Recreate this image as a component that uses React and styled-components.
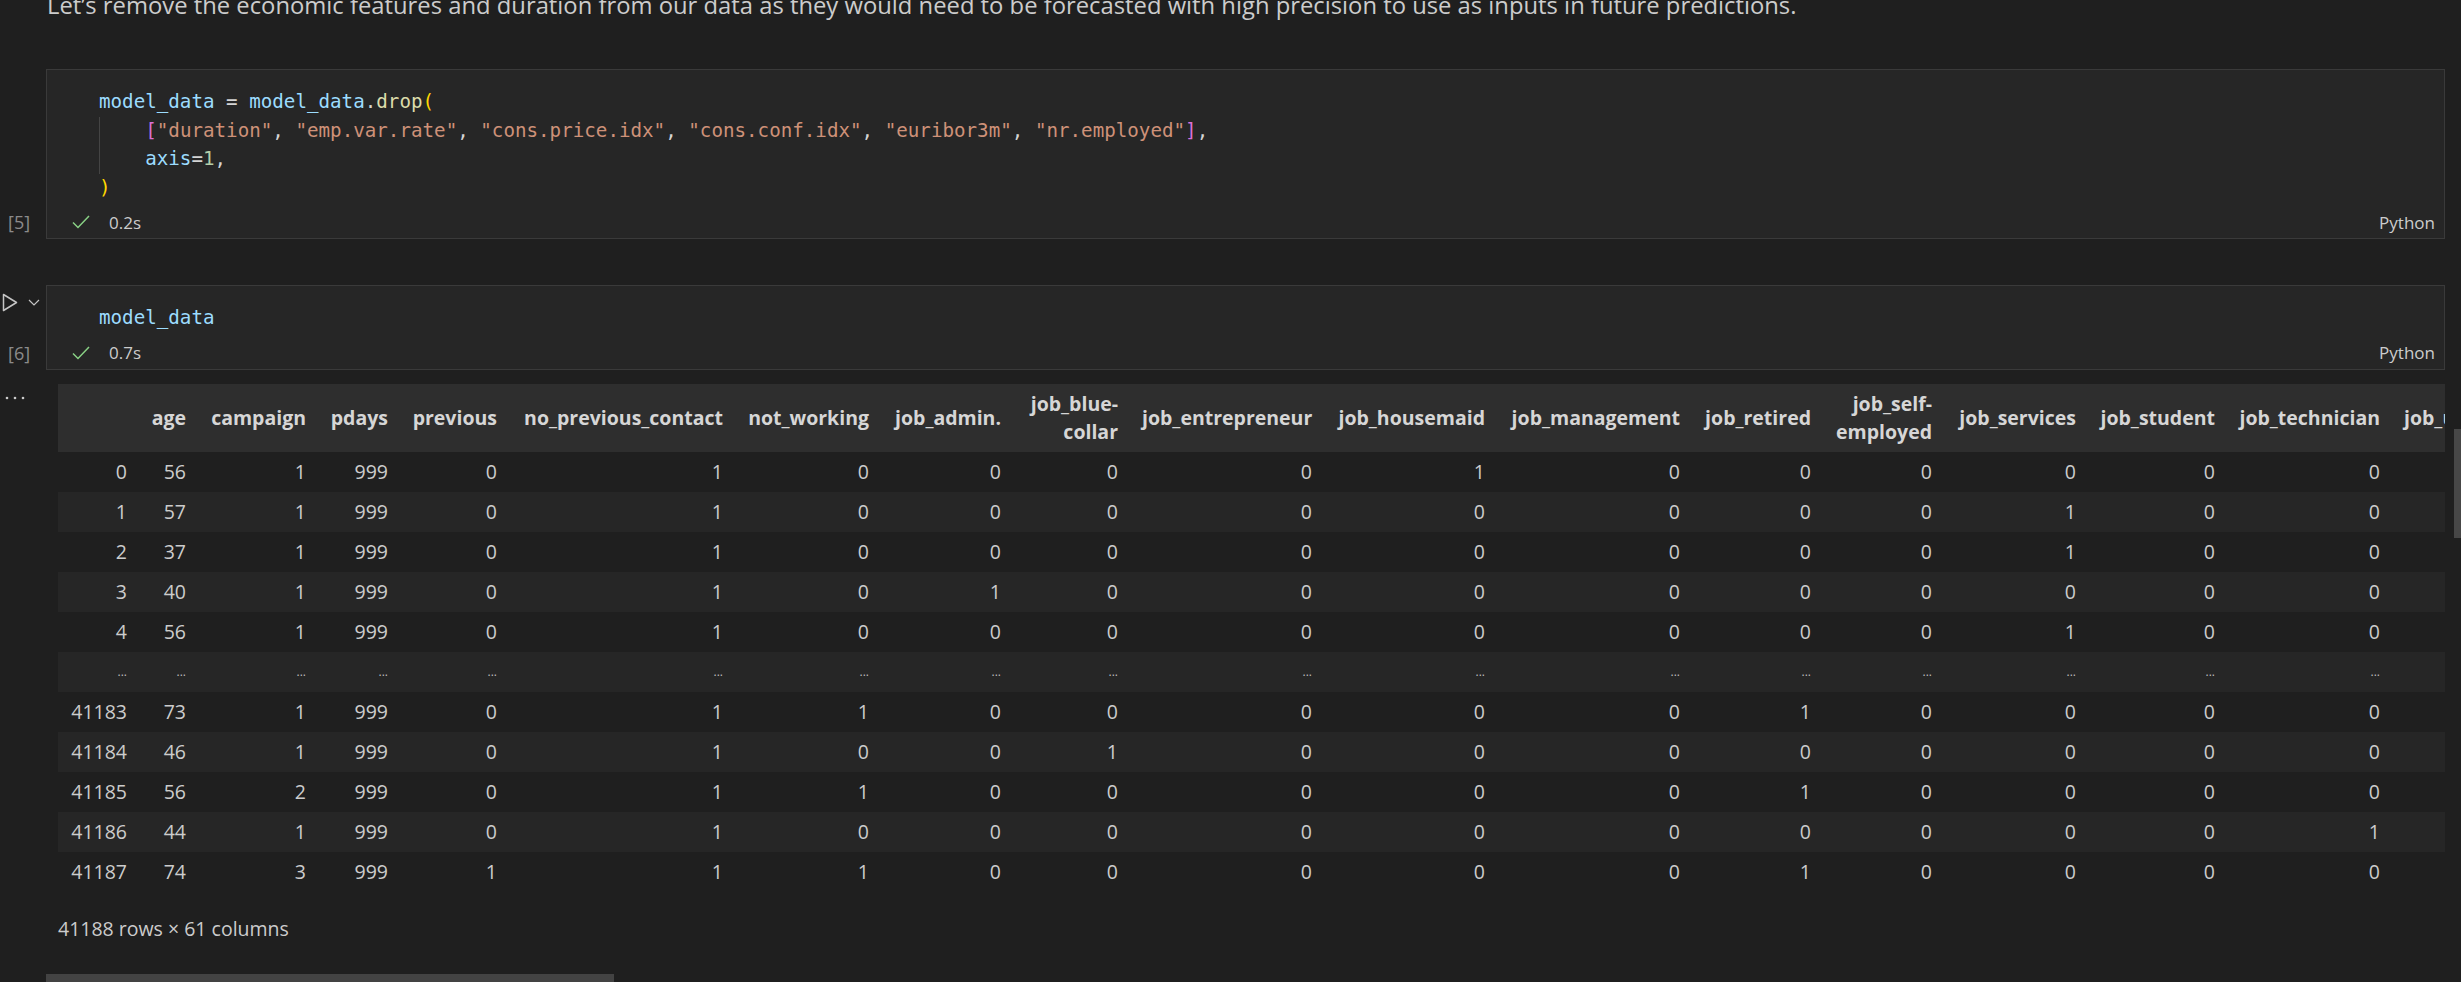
import React from 'react'
import styled, { createGlobalStyle } from 'styled-components'

const GlobalStyle = createGlobalStyle`
    html, body {
        margin: 0;
        padding: 0;
        background: #1f1f1f;
        overflow: hidden;
    }
`

const UI = `"Open Sans", "Noto Sans", sans-serif`
const MONO = `"DejaVu Sans Mono", "Liberation Mono", monospace`

const Page = styled.div`
    position: relative;
    width: 2461px;
    height: 982px;
    overflow: hidden;
    background: #1f1f1f;
    color: #cccccc;
    font-family: ${UI};
`

const Markdown = styled.p`
    margin: -12px 0 0 47px;
    font-size: 23.8px;
    line-height: 35px;
    color: #cccccc;
    white-space: nowrap;
`

const CellRow = styled.div`
    display: flex;
    margin-top: ${p => p.gap}px;
`

const Gutter = styled.div`
    width: 46px;
    flex: none;
    display: flex;
    flex-direction: column;
    justify-content: space-between;
`

const RunControls = styled.div`
    height: 34px;
    display: flex;
    align-items: center;
    gap: 10px;
    padding-left: 2px;
    visibility: ${p => (p.visible ? 'visible' : 'hidden')};
`

const ExecCount = styled.div`
    height: 32px;
    margin-bottom: 1px;
    display: flex;
    align-items: center;
    padding-left: 8px;
    font-size: 18px;
    color: #8b8b8b;
`

const CellBox = styled.div`
    flex: 1;
    margin-right: 16px;
    background: #262626;
    border: 1px solid #3a3a3a;
`

const Editor = styled.pre`
    margin: 0;
    padding: 18px 0 0 52px;
    font-family: ${MONO};
    font-size: 19.2px;
    line-height: 28.5px;
    color: #d4d4d4;
`

const Line = styled.div`
    position: relative;
    height: 28.5px;
`

const IndentGuide = styled.span`
    position: absolute;
    left: 0;
    top: 0;
    bottom: 0;
    border-left: 1px solid #444444;
`

const Tok = styled.span`
    color: ${p => p.c};
`

const StatusBar = styled.div`
    height: 32px;
    margin-top: 4px;
    display: flex;
    align-items: center;
    padding: 0 9px 0 25px;
    font-size: 17px;
    color: #cccccc;
`

const Duration = styled.span`
    margin-left: 19px;
`

const Lang = styled.span`
    margin-left: auto;
`

const OutputRow = styled.div`
    display: flex;
`

const OutputGutter = styled.div`
    width: 46px;
    flex: none;
    display: flex;
    align-items: flex-start;
    padding: 26px 0 0 5px;
    box-sizing: border-box;
`

const Output = styled.div`
    flex: 1;
    margin-right: 16px;
    padding: 14px 0 0 12px;
    overflow: hidden;
`

const Table = styled.table`
    table-layout: fixed;
    border-collapse: collapse;
    border-spacing: 0;
    font-size: 19.5px;
    line-height: 28px;
    color: #cccccc;
`

const Th = styled.th`
    padding: 6px 12px;
    text-align: right;
    vertical-align: middle;
    font-weight: 700;
    color: #d6d6d6;
    overflow-wrap: normal;
`

const Td = styled.td`
    padding: 6px 12px;
    text-align: right;
    white-space: nowrap;
`

const HeadRow = styled.tr`
    background: #2e2e2e;
`

const BodyRow = styled.tr`
    background: ${p => (p.striped ? '#262626' : 'transparent')};
`

const Dots = styled.td`
    padding: 6px 12px;
    text-align: right;
    font-size: 12px;
    line-height: 28px;
    vertical-align: bottom;
    color: #bbbbbb;
`

const Shape = styled.p`
    margin: 23px 0 0 0;
    font-size: 19.5px;
    line-height: 28px;
`

const HScroll = styled.div`
    margin: 31px 0 0 -12px;
    width: 568px;
    height: 12px;
    background: #434343;
`

const VScroll = styled.div`
    position: absolute;
    right: 0;
    top: 429px;
    width: 7px;
    height: 109px;
    background: #474747;
`

const RunIcon = () => (
    <svg width="16" height="19" viewBox="0 0 16 19">
        <path d="M1.5 1.5 L14.5 9.5 L1.5 17.5 Z" fill="none" stroke="#c5c5c5" strokeWidth="1.5" strokeLinejoin="round" />
    </svg>
)

const Chevron = () => (
    <svg width="12" height="7" viewBox="0 0 12 7">
        <path d="M1 1 L6 6 L11 1" fill="none" stroke="#c5c5c5" strokeWidth="1.2" />
    </svg>
)

const Check = () => (
    <svg width="18" height="14" viewBox="0 0 18 14">
        <path d="M1 7.5 L6 12.5 L17 1" fill="none" stroke="#89d185" strokeWidth="1.5" />
    </svg>
)

const MoreIcon = () => (
    <svg width="20" height="4" viewBox="0 0 20 4">
        <circle cx="2" cy="2" r="1.3" fill="#cccccc" />
        <circle cx="10" cy="2" r="1.3" fill="#cccccc" />
        <circle cx="18" cy="2" r="1.3" fill="#cccccc" />
    </svg>
)

const C = {
    v: '#9cdcfe',
    p: '#d4d4d4',
    f: '#dcdcaa',
    b1: '#ffd700',
    b2: '#da70d6',
    s: '#ce9178',
    n: '#b5cea8',
}

const drops = ['duration', 'emp.var.rate', 'cons.price.idx', 'cons.conf.idx', 'euribor3m', 'nr.employed']

const columns = [
    ['', 81], ['age', 59], ['campaign', 120], ['pdays', 82], ['previous', 109],
    ['no_previous_contact', 226], ['not_working', 146], ['job_admin.', 132],
    ['job_blue-collar', 117], ['job_entrepreneur', 194], ['job_housemaid', 173],
    ['job_management', 195], ['job_retired', 131], ['job_self-employed', 121],
    ['job_services', 144], ['job_student', 139], ['job_technician', 165],
    ['job_unemployed', 170], ['job_unknown', 150], ['marital_divorced', 180],
]

const rows = [
    [0, 56, 1, 999, 0, 1, 0, 0, 0, 0, 1, 0, 0, 0, 0, 0, 0, 0, 0, 0],
    [1, 57, 1, 999, 0, 1, 0, 0, 0, 0, 0, 0, 0, 0, 1, 0, 0, 0, 0, 0],
    [2, 37, 1, 999, 0, 1, 0, 0, 0, 0, 0, 0, 0, 0, 1, 0, 0, 0, 0, 0],
    [3, 40, 1, 999, 0, 1, 0, 1, 0, 0, 0, 0, 0, 0, 0, 0, 0, 0, 0, 0],
    [4, 56, 1, 999, 0, 1, 0, 0, 0, 0, 0, 0, 0, 0, 1, 0, 0, 0, 0, 0],
    null,
    [41183, 73, 1, 999, 0, 1, 1, 0, 0, 0, 0, 0, 1, 0, 0, 0, 0, 0, 0, 0],
    [41184, 46, 1, 999, 0, 1, 0, 0, 1, 0, 0, 0, 0, 0, 0, 0, 0, 0, 0, 0],
    [41185, 56, 2, 999, 0, 1, 1, 0, 0, 0, 0, 0, 1, 0, 0, 0, 0, 0, 0, 0],
    [41186, 44, 1, 999, 0, 1, 0, 0, 0, 0, 0, 0, 0, 0, 0, 0, 1, 0, 0, 0],
    [41187, 74, 3, 999, 1, 1, 1, 0, 0, 0, 0, 0, 1, 0, 0, 0, 0, 0, 0, 0],
]

const tableWidth = columns.reduce((s, c) => s + c[1], 0)

const DataFrame = () => (
    <Table style={{ width: tableWidth }}>
        <colgroup>
            {columns.map(([name, w], i) => <col key={i} style={{ width: w }} />)}
        </colgroup>
        <thead>
            <HeadRow>
                {columns.map(([name], i) => <Th key={i}>{name}</Th>)}
            </HeadRow>
        </thead>
        <tbody>
            {rows.map((r, i) => (
                <BodyRow key={i} striped={i % 2 === 1}>
                    {r
                        ? r.map((v, j) => <Td key={j}>{v}</Td>)
                        : columns.map((_, j) => <Dots key={j}>...</Dots>)}
                </BodyRow>
            ))}
        </tbody>
    </Table>
)

export default function App() {
    return (
        <Page>
            <GlobalStyle />
            <Markdown>
                Let’s remove the economic features and duration from our data as they would need to be forecasted with high precision to use as inputs in future predictions.
            </Markdown>

            <CellRow gap={46}>
                <Gutter>
                    <RunControls />
                    <ExecCount>[5]</ExecCount>
                </Gutter>
                <CellBox>
                    <Editor>
                        <Line>
                            <Tok c={C.v}>model_data</Tok> = <Tok c={C.v}>model_data</Tok>.<Tok c={C.f}>drop</Tok><Tok c={C.b1}>(</Tok>
                        </Line>
                        <Line>
                            <IndentGuide />
                            {'    '}<Tok c={C.b2}>[</Tok>
                            {drops.map((d, i) => (
                                <React.Fragment key={d}>
                                    <Tok c={C.s}>"{d}"</Tok>{i < drops.length - 1 ? ', ' : ''}
                                </React.Fragment>
                            ))}
                            <Tok c={C.b2}>]</Tok>,
                        </Line>
                        <Line>
                            <IndentGuide />
                            {'    '}<Tok c={C.v}>axis</Tok>=<Tok c={C.n}>1</Tok>,
                        </Line>
                        <Line>
                            <Tok c={C.b1}>)</Tok>
                        </Line>
                    </Editor>
                    <StatusBar>
                        <Check />
                        <Duration>0.2s</Duration>
                        <Lang>Python</Lang>
                    </StatusBar>
                </CellBox>
            </CellRow>

            <CellRow gap={46}>
                <Gutter>
                    <RunControls visible>
                        <RunIcon />
                        <Chevron />
                    </RunControls>
                    <ExecCount>[6]</ExecCount>
                </Gutter>
                <CellBox>
                    <Editor>
                        <Line>
                            <Tok c={C.v}>model_data</Tok>
                        </Line>
                    </Editor>
                    <StatusBar>
                        <Check />
                        <Duration>0.7s</Duration>
                        <Lang>Python</Lang>
                    </StatusBar>
                </CellBox>
            </CellRow>

            <OutputRow>
                <OutputGutter>
                    <MoreIcon />
                </OutputGutter>
                <Output>
                    <DataFrame />
                    <Shape>41188 rows × 61 columns</Shape>
                    <HScroll />
                </Output>
            </OutputRow>

            <VScroll />
        </Page>
    )
}
